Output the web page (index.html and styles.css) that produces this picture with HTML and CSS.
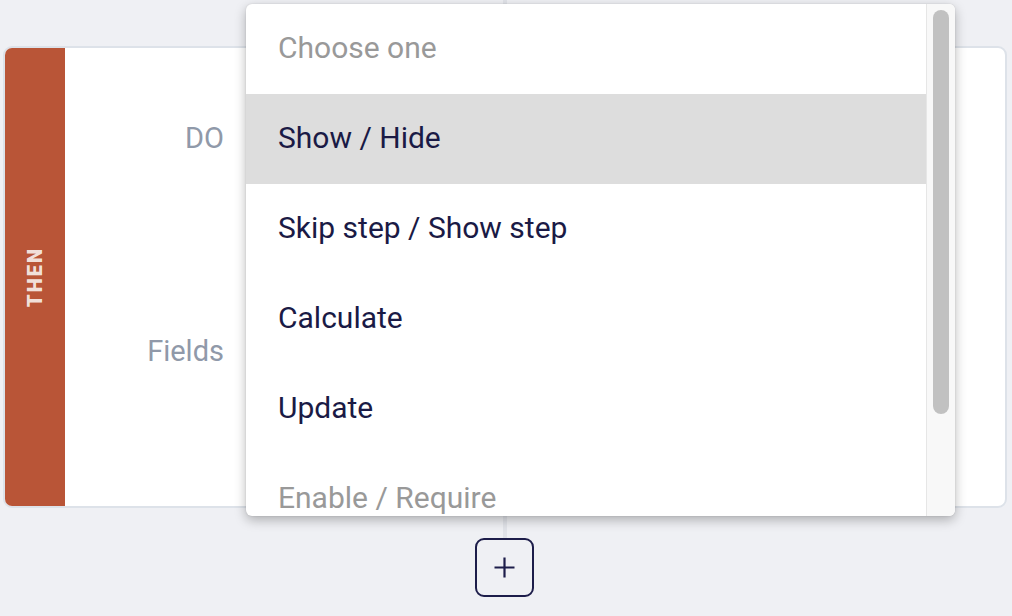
FILE: index.html
```html
<!DOCTYPE html>
<html>
<head>
<meta charset="utf-8">
<link rel="stylesheet" href="styles.css">
</head>
<body>
<div class="page">
  <div class="connector connector-top"></div>
  <div class="card">
    <div class="then-bar"><span class="then-label">THEN</span></div>
    <div class="card-body">
      <div class="row row-do"><span class="label">DO</span></div>
      <div class="row row-fields"><span class="label">Fields</span></div>
    </div>
  </div>
  <div class="connector connector-bottom"></div>
  <button class="add-btn" aria-label="Add">
    <svg width="21" height="21" viewBox="0 0 21 21"><path d="M10.5 0.5v20M0.5 10.5h20" stroke="#1d1d4a" stroke-width="2.2" fill="none"/></svg>
  </button>

  <div class="dropdown">
    <ul class="options">
      <li class="option placeholder">Choose one</li>
      <li class="option active">Show / Hide</li>
      <li class="option">Skip step / Show step</li>
      <li class="option">Calculate</li>
      <li class="option">Update</li>
      <li class="option placeholder">Enable / Require</li>
    </ul>
    <div class="scrollbar"><div class="thumb"></div></div>
  </div>
</div>
</body>
</html>
```
FILE: styles.css
```css
* { box-sizing: border-box; }
html, body { margin: 0; padding: 0; }
body {
  background: #eff0f4;
  font-family: Roboto, "Liberation Sans", sans-serif;
  width: 1012px;
  height: 616px;
  overflow: hidden;
}
.page {
  position: relative;
  width: 1010px;
  height: 616px;
  display: flex;
  flex-direction: column;
  align-items: center;
}
.connector {
  width: 4px;
  background: #e1e3e9;
}
.connector-top { height: 46px; }
.connector-bottom { height: 30px; }
.card {
  width: 1004px;
  height: 462px;
  border: 2px solid #dde2e9;
  border-radius: 9px;
  background: #fff;
  display: flex;
  overflow: hidden;
}
.then-bar {
  width: 60px;
  flex: none;
  background: #b95537;
  display: flex;
  align-items: center;
  justify-content: center;
}
.then-label {
  transform: rotate(-90deg);
  color: rgba(255,255,255,0.84);
  font-weight: 900;
  font-size: 20px;
  letter-spacing: 2px;
  white-space: nowrap;
}
.card-body {
  flex: 1;
  display: flex;
  flex-direction: column;
  padding-top: 72px;
}
.row {
  width: 159px;
  display: flex;
  justify-content: flex-end;
  height: 36px;
  align-items: center;
}
.row-fields { margin-top: 177px; }
.label {
  color: #9099a9;
  font-size: 29px;
}
.add-btn {
  width: 59px;
  height: 59px;
  border: 2px solid #1d1d4a;
  border-radius: 9px;
  background: transparent;
  display: flex;
  align-items: center;
  justify-content: center;
  padding: 0;
  margin-left: -1px;
}
.add-btn svg { display: block; }
.dropdown {
  position: absolute;
  left: 246px;
  top: 4px;
  width: 709px;
  height: 512px;
  background: #fff;
  border-radius: 6px;
  box-shadow: 0 4px 12px rgba(0,0,0,0.28), 0 0 2px rgba(0,0,0,0.12);
  overflow: hidden;
  display: flex;
}
.options {
  list-style: none;
  margin: 0;
  padding: 0;
  flex: 1;
}
.option {
  height: 90px;
  display: flex;
  align-items: center;
  padding: 0 0 3px 32px;
  font-size: 30px;
  color: #1a1a45;
}
.option.placeholder { color: #999999; }
.option.active { background: #dddddd; }
.scrollbar {
  width: 29px;
  flex: none;
  background: #f8f8f8;
  border-left: 1px solid #e6e6e6;
  padding: 6px 6px 0 6px;
}
.thumb {
  width: 16px;
  height: 404px;
  background: #c1c1c1;
  border-radius: 8px;
}
```
